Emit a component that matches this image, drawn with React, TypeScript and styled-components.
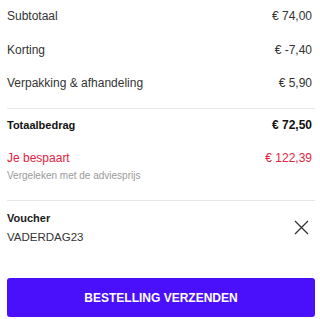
import React from "react";
import styled, { createGlobalStyle } from "styled-components";

const Global = createGlobalStyle`
  html, body { margin: 0; padding: 0; background: #ffffff; }
  body { font-family: "Liberation Sans", Arial, sans-serif; }
`;

const Panel = styled.div`
  width: 308px;
  margin-left: 7px;
  display: flex;
  flex-direction: column;
  color: #333333;
`;

const Lines = styled.div`
  display: flex;
  flex-direction: column;
  padding-bottom: 8px;
`;

const Row = styled.div<{ $h?: number }>`
  display: flex;
  justify-content: space-between;
  align-items: center;
  height: ${(p) => p.$h ?? 33}px;
  font-size: 12px;
  line-height: 15px;
  padding-right: 3px;
`;

const Divider = styled.hr`
  border: none;
  border-top: 1px solid #e6e6e6;
  margin: 0;
  height: 0;
`;

const TotalRow = styled(Row)`
  font-weight: bold;
  color: #111111;
`;

const TotalLabel = styled.span`
  font-size: 11px;
`;

const Savings = styled.div`
  display: flex;
  flex-direction: column;
  padding: 8px 0 17px;
`;

const SaveRow = styled.div`
  display: flex;
  justify-content: space-between;
  font-size: 12px;
  line-height: 16px;
  color: #e2223d;
  padding-right: 3px;
`;

const Note = styled.div`
  font-size: 10px;
  line-height: 14px;
  color: #9a9a9a;
  margin-top: 3px;
`;

const Voucher = styled.div`
  display: flex;
  justify-content: space-between;
  align-items: center;
  padding: 9px 0 0;
`;

const VoucherText = styled.div`
  display: flex;
  flex-direction: column;
`;

const VoucherLabel = styled.div`
  font-size: 11px;
  line-height: 16px;
  font-weight: bold;
  color: #1a1a1a;
`;

const VoucherCode = styled.div`
  font-size: 11.5px;
  line-height: 16px;
  margin-top: 3px;
  color: #333333;
`;

const CloseBtn = styled.button`
  border: none;
  background: none;
  padding: 0;
  width: 16px;
  height: 16px;
  margin-right: 6px;
  display: flex;
  align-items: center;
  justify-content: center;
  cursor: pointer;
`;

const Submit = styled.button`
  margin-top: 33px;
  height: 39px;
  border: none;
  border-radius: 3px;
  background: #4a10fb;
  color: #ffffff;
  font-family: "Liberation Sans", Arial, sans-serif;
  font-weight: bold;
  font-size: 12px;
  letter-spacing: 0;
  cursor: pointer;
`;

export default function App() {
  return (
    <>
      <Global />
      <Panel>
        <Lines>
          <Row>
            <span>Subtotaal</span>
            <span>€ 74,00</span>
          </Row>
          <Row $h={34}>
            <span>Korting</span>
            <span>€ -7,40</span>
          </Row>
          <Row>
            <span>Verpakking &amp; afhandeling</span>
            <span>€ 5,90</span>
          </Row>
        </Lines>
        <Divider />
        <TotalRow $h={33}>
          <TotalLabel>Totaalbedrag</TotalLabel>
          <span>€ 72,50</span>
        </TotalRow>
        <Savings>
          <SaveRow>
            <span>Je bespaart</span>
            <span>€ 122,39</span>
          </SaveRow>
          <Note>Vergeleken met de adviesprijs</Note>
        </Savings>
        <Divider />
        <Voucher>
          <VoucherText>
            <VoucherLabel>Voucher</VoucherLabel>
            <VoucherCode>VADERDAG23</VoucherCode>
          </VoucherText>
          <CloseBtn aria-label="Verwijder voucher">
            <svg width="15" height="15" viewBox="0 0 15 15">
              <path d="M1 1 L14 14 M14 1 L1 14" stroke="#333" strokeWidth="1.3" fill="none" />
            </svg>
          </CloseBtn>
        </Voucher>
        <Submit>BESTELLING VERZENDEN</Submit>
      </Panel>
    </>
  );
}
